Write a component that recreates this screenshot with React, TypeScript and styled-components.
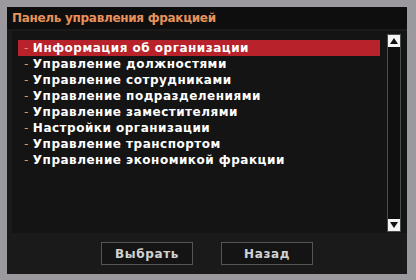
import React from "react";
import styled, { createGlobalStyle } from "styled-components";

const GlobalStyle = createGlobalStyle`
  html, body {
    margin: 0;
    padding: 0;
    background: #9b999e;
  }
  body {
    font-family: "DejaVu Sans", "Liberation Sans", sans-serif;
  }
`;

const Page = styled.div`
  width: 416px;
  height: 280px;
  padding: 7px;
  box-sizing: border-box;
`;

const Window = styled.div`
  width: 400px;
  height: 267px;
  display: flex;
  flex-direction: column;
  background: #1a1a1a;
`;

const TitleBar = styled.div`
  height: 22px;
  flex: none;
  display: flex;
  align-items: center;
  padding-left: 5px;
  background: #0e0e0e;
  color: #e8925a;
  font-size: 12px;
  font-weight: bold;
  letter-spacing: -0.3px;
`;

const Body = styled.div`
  flex: 1;
  display: flex;
  flex-direction: column;
  padding: 2px 0 0 5px;
`;

const ListPanel = styled.div`
  height: 202px;
  display: flex;
  background: #141414;
`;

const List = styled.ul`
  flex: 1;
  list-style: none;
  margin: 0;
  padding: 9px 7px 0 6px;
`;

const Row = styled.li<{ selected?: boolean }>`
  height: 16px;
  display: flex;
  align-items: center;
  padding-left: 6px;
  background: ${(p) => (p.selected ? "#b8222b" : "transparent")};
  color: #ffffff;
  font-size: 12px;
  font-weight: bold;
  letter-spacing: 0.5px;
  white-space: nowrap;
`;

const Dash = styled.span`
  color: #e8925a;
  font-weight: normal;
  margin-right: 4px;
`;

const ScrollBar = styled.div`
  width: 14px;
  margin: 3px 6px 1px 0;
  display: flex;
  flex-direction: column;
  border: 1px solid #4a4f4a;
  background: #0f0f0f;
  box-sizing: border-box;
`;

const ScrollButton = styled.div`
  height: 12px;
  flex: none;
  background: #f4f4f4;
  display: flex;
  align-items: center;
  justify-content: center;
`;

const Track = styled.div`
  flex: 1;
`;

const Footer = styled.div`
  flex: 1;
  display: flex;
  justify-content: center;
  align-items: flex-start;
  gap: 28px;
  padding: 9px 5px 0 0;
`;

const Button = styled.button`
  width: 92px;
  height: 23px;
  background: #141414;
  border: 1px solid #555555;
  color: #d2d2d2;
  font-family: "DejaVu Sans", "Liberation Sans", sans-serif;
  font-size: 12px;
  font-weight: bold;
  letter-spacing: 0.6px;
  padding: 0;
  cursor: pointer;
`;

const Arrow = ({ up }: { up?: boolean }) => (
  <svg width="8" height="6" viewBox="0 0 8 6">
    <polygon
      points={up ? "4,0 8,6 0,6" : "0,0 8,0 4,6"}
      fill="#111111"
    />
  </svg>
);

const items = [
  "Информация об организации",
  "Управление должностями",
  "Управление сотрудниками",
  "Управление подразделениями",
  "Управление заместителями",
  "Настройки организации",
  "Управление транспортом",
  "Управление экономикой фракции",
];

export default function App() {
  return (
    <>
      <GlobalStyle />
      <Page>
        <Window>
          <TitleBar>Панель управления фракцией</TitleBar>
          <Body>
            <ListPanel>
              <List>
                {items.map((item, i) => (
                  <Row key={item} selected={i === 0}>
                    <Dash>-</Dash>
                    {item}
                  </Row>
                ))}
              </List>
              <ScrollBar>
                <ScrollButton>
                  <Arrow up />
                </ScrollButton>
                <Track />
                <ScrollButton>
                  <Arrow />
                </ScrollButton>
              </ScrollBar>
            </ListPanel>
            <Footer>
              <Button>Выбрать</Button>
              <Button>Назад</Button>
            </Footer>
          </Body>
        </Window>
      </Page>
    </>
  );
}
